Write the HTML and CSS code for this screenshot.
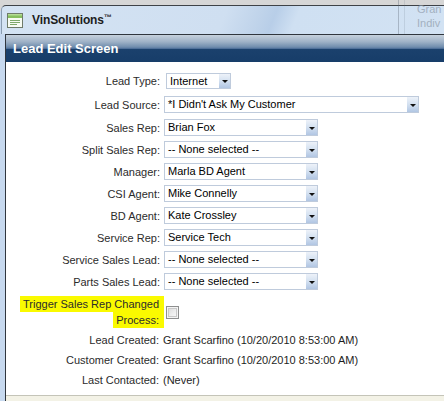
FILE: index.html
```html
<!DOCTYPE html>
<html>
<head>
<meta charset="utf-8">
<title>Lead Edit Screen</title>
<link rel="stylesheet" href="styles.css">
</head>
<body>
<div class="screen">
  <div class="topstrip"></div>
  <div class="titlewrap">
    <div class="titlebar">
      <svg class="app-icon" width="16" height="15" viewBox="0 0 16 15">
        <rect x="0.5" y="0.5" width="15" height="14" fill="#f7fbf2" stroke="#6f7b6a"/>
        <rect x="1" y="1" width="14" height="4" fill="#86bf5e"/>
        <rect x="1" y="1" width="14" height="1.5" fill="#b4dc93"/>
        <rect x="3" y="7" width="10" height="1" fill="#7fa86a"/>
        <rect x="3" y="9" width="10" height="1" fill="#7fa86a"/>
        <rect x="3" y="11" width="7" height="1" fill="#7fa86a"/>
      </svg>
      <span class="app-name">VinSolutions<span class="tm">™</span></span>
    </div>
  </div>
  <div class="ghost">
    <div class="ghost-line"></div>
    <div class="ghost-line second"></div>
    <div class="ghost-text">Gran<br>Indiv</div>
  </div>
  <div class="frame">
    <div class="panel">
      <div class="header">Lead Edit Screen</div>
      <div class="form">
        <div class="row first">
          <div class="label">Lead Type:</div>
          <div class="select type"><span class="val">Internet</span><span class="btn"></span></div>
        </div>
        <div class="row second">
          <div class="label">Lead Source:</div>
          <div class="select wide"><span class="val">*I Didn't Ask My Customer</span><span class="btn"></span></div>
        </div>
        <div class="row">
          <div class="label">Sales Rep:</div>
          <div class="select"><span class="val">Brian Fox</span><span class="btn"></span></div>
        </div>
        <div class="row">
          <div class="label">Split Sales Rep:</div>
          <div class="select"><span class="val">-- None selected --</span><span class="btn"></span></div>
        </div>
        <div class="row">
          <div class="label">Manager:</div>
          <div class="select"><span class="val">Marla BD Agent</span><span class="btn"></span></div>
        </div>
        <div class="row">
          <div class="label">CSI Agent:</div>
          <div class="select"><span class="val">Mike Connelly</span><span class="btn"></span></div>
        </div>
        <div class="row">
          <div class="label">BD Agent:</div>
          <div class="select"><span class="val">Kate Crossley</span><span class="btn"></span></div>
        </div>
        <div class="row">
          <div class="label">Service Rep:</div>
          <div class="select"><span class="val">Service Tech</span><span class="btn"></span></div>
        </div>
        <div class="row">
          <div class="label">Service Sales Lead:</div>
          <div class="select"><span class="val">-- None selected --</span><span class="btn"></span></div>
        </div>
        <div class="row">
          <div class="label">Parts Sales Lead:</div>
          <div class="select"><span class="val">-- None selected --</span><span class="btn"></span></div>
        </div>
        <div class="row trigger">
          <div class="label wrap"><span class="hl">Trigger Sales Rep Changed Process:</span></div>
          <div class="check"></div>
        </div>
        <div class="info first-info">
          <div class="label">Lead Created:</div>
          <div class="value">Grant Scarfino (10/20/2010 8:53:00 AM)</div>
        </div>
        <div class="info">
          <div class="label">Customer Created:</div>
          <div class="value">Grant Scarfino (10/20/2010 8:53:00 AM)</div>
        </div>
        <div class="info">
          <div class="label">Last Contacted:</div>
          <div class="value">(Never)</div>
        </div>
      </div>
      <div class="footer"></div>
    </div>
  </div>
</div>
</body>
</html>
```

FILE: styles.css
```css
* { box-sizing: border-box; }
html, body { margin: 0; padding: 0; }
body {
  width: 444px;
  height: 401px;
  overflow: hidden;
  background: #c7d9ef;
  font-family: "Liberation Sans", Arial, sans-serif;
  font-size: 11px;
  color: #2b2b2b;
}
.screen {
  position: relative;
  width: 444px;
  height: 401px;
  overflow: hidden;
  display: flex;
  flex-direction: column;
}
.topstrip {
  flex: none;
  height: 5px;
  background: #d6d6d6;
}
.titlewrap {
  flex: none;
  background: linear-gradient(#d6d6d6 0, #d6d6d6 6px, #c7d9ef 6px);
}
.titlebar {
  height: 29px;
  margin-left: 1px;
  border-top: 1px solid #3e4247;
  border-left: 1px solid #8a9cb0;
  border-top-left-radius: 5px;
  background: linear-gradient(112deg, #d4e3f3 0%, #cfdff1 50%, #bfd3ea 58%, #b8cee8 61%, #cfe0f2 66%, #d2e2f3 100%);
  display: flex;
  align-items: center;
  padding-left: 5px;
  gap: 9px;
}
.app-icon { flex: none; margin-top: 1px; }
.app-name {
  font-weight: bold;
  font-size: 12px;
  color: #1d1d1d;
  letter-spacing: -0.1px;
}
.tm {
  font-size: 8px;
  vertical-align: 4px;
  font-weight: bold;
}
.ghost {
  position: absolute;
  left: 398px;
  top: 0;
  width: 46px;
  height: 34px;
  overflow: hidden;
}
.ghost-line {
  position: absolute;
  left: 0;
  top: 0;
  width: 1px;
  height: 34px;
  background: rgba(90, 100, 115, 0.35);
}
.ghost-line.second { left: 6px; background: rgba(90, 100, 115, 0.15); }
.ghost-text {
  position: absolute;
  left: 19px;
  top: 2px;
  font-size: 11px;
  line-height: 14px;
  color: #8f9caa;
  opacity: 0.7;
}
.frame {
  flex: 1;
  display: flex;
  padding-left: 5px;
  min-height: 0;
}
.panel {
  flex: 1;
  background: #fff;
  border-left: 1px solid #30363e;
  border-top: 1px solid #30363e;
  display: flex;
  flex-direction: column;
}
.header {
  flex: none;
  height: 27px;
  line-height: 27px;
  padding-left: 7px;
  color: #fff;
  font-weight: bold;
  font-size: 13px;
  background: linear-gradient(#c6d1dd 0%, #9fb2c7 25%, #6f8cad 45%, #4f709a 50%, #1b416d 52%, #173d69 100%);
}
.form {
  flex: none;
  padding: 11px 0 5px 0;
  display: flex;
  flex-direction: column;
  gap: 5px;
}
.row {
  display: grid;
  grid-template-columns: 154px auto;
  column-gap: 4px;
  align-items: center;
}
.row.first { margin-bottom: 2px; }
.row.second { margin-bottom: 1px; }
.label {
  text-align: right;
  white-space: nowrap;
  color: #2b2b2b;
}
.select {
  width: 154px;
  height: 17px;
  border: 1px solid #bfcbdc;
  background: #fff;
  display: flex;
}
.select.type { width: 65px; height: 16px; margin-left: 2px; }
.select.wide { width: 255px; }
.val {
  flex: 1;
  padding-left: 3px;
  line-height: 15px;
  color: #000;
  white-space: nowrap;
  overflow: hidden;
}
.type .val { line-height: 14px; }
.btn {
  flex: none;
  width: 11px;
  background: linear-gradient(#edf2f9 0%, #d3e0f0 50%, #b1c6e3 100%);
  display: flex;
  align-items: center;
  justify-content: center;
  padding-top: 1px;
}
.btn::after {
  content: "";
  width: 0;
  height: 0;
  border-left: 3px solid transparent;
  border-right: 3px solid transparent;
  border-top: 3px solid #111;
}
.row.trigger {
  grid-template-columns: 158px auto;
  column-gap: 2px;
  margin-top: 1px;
}
.label.wrap {
  white-space: normal;
  line-height: 16px;
  padding-left: 10px;
}
.hl {
  background: #fafa00;
  padding: 2px 5px 2px 3px;
  -webkit-box-decoration-break: clone;
  box-decoration-break: clone;
}
.check {
  width: 13px;
  height: 13px;
  border: 1px solid #8e8f8f;
  background: linear-gradient(135deg, #d6d6d6 0%, #f0f0f0 60%, #fbfbfb 100%);
  box-shadow: inset 0 0 0 1px #f4f4f4, inset 0 0 0 2px #c9c9c9;
}
.info {
  display: grid;
  grid-template-columns: 153px auto;
  column-gap: 4px;
  height: 20px;
  line-height: 20px;
  margin-top: -5px;
}
.info.first-info { margin-top: -3px; }
.value { color: #1e1e1e; white-space: nowrap; }
.footer {
  flex: 1;
  border-top: 1px solid #c4c4b8;
  background: #f3f2e6;
}
```
